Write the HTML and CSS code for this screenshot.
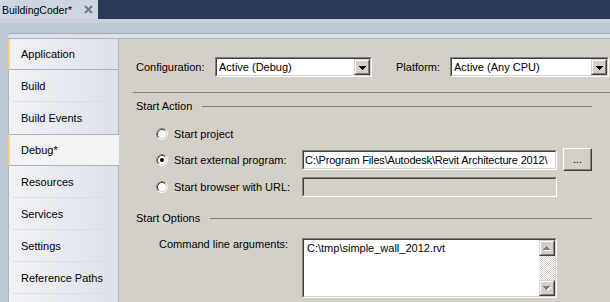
FILE: index.html
```html
<!DOCTYPE html>
<html>
<head>
<meta charset="utf-8">
<link rel="stylesheet" href="styles.css">
</head>
<body>
<div class="titlebar">
  <div class="doctab">
    <span class="doctab-title">BuildingCoder*</span>
    <svg class="close" width="9" height="9" viewBox="0 0 9 9"><path d="M1 1L8 8M8 1L1 8" stroke="#6b788b" stroke-width="1.8" fill="none"/></svg>
  </div>
  <div class="titlefill"></div>
</div>
<div class="band"></div>
<div class="workspace">
  <div class="frame">
    <div class="frame-top"></div>
    <div class="frame-body">
      <nav class="nav">
        <div class="item first">Application</div>
        <div class="item sep">Build</div>
        <div class="item">Build Events</div>
        <div class="item current">Debug*</div>
        <div class="item sep">Resources</div>
        <div class="item sep">Services</div>
        <div class="item sep">Settings</div>
        <div class="item sep">Reference Paths</div>
        <div class="item sep"></div>
      </nav>
      <main class="content">
        <div class="config-row">
          <span class="lbl-config">Configuration:</span>
          <div class="sunken combo combo-config">
            <div class="sunken-in combo-in">
              <span class="combo-text">Active (Debug)</span>
              <div class="raised arrow-btn"><div class="raised-in">
                <svg width="7" height="4" viewBox="0 0 7 4" shape-rendering="crispEdges"><rect x="0" y="0" width="7" height="1"/><rect x="1" y="1" width="5" height="1"/><rect x="2" y="2" width="3" height="1"/><rect x="3" y="3" width="1" height="1"/></svg>
              </div></div>
            </div>
          </div>
          <span class="lbl-platform">Platform:</span>
          <div class="sunken combo combo-platform">
            <div class="sunken-in combo-in">
              <span class="combo-text">Active (Any CPU)</span>
              <div class="raised arrow-btn"><div class="raised-in">
                <svg width="7" height="4" viewBox="0 0 7 4" shape-rendering="crispEdges"><rect x="0" y="0" width="7" height="1"/><rect x="1" y="1" width="5" height="1"/><rect x="2" y="2" width="3" height="1"/><rect x="3" y="3" width="1" height="1"/></svg>
              </div></div>
            </div>
          </div>
        </div>

        <div class="rule"></div>

        <div class="group group-action"><span>Start Action</span><span class="group-line"></span></div>

        <div class="radio-row row1">
          <label class="radio-label">
            <svg class="radio" width="12" height="12" viewBox="0 0 12 12"><circle cx="6" cy="6" r="5" fill="#fff"/><path d="M2.11 9.89A5.5 5.5 0 0 1 9.89 2.11" stroke="#808080" fill="none"/><path d="M9.89 2.11A5.5 5.5 0 0 1 2.11 9.89" stroke="#fff" fill="none"/><path d="M2.82 9.18A4.5 4.5 0 0 1 9.18 2.82" stroke="#404040" fill="none"/><path d="M9.18 2.82A4.5 4.5 0 0 1 2.82 9.18" stroke="#d4d0c8" fill="none"/></svg>
            <span>Start project</span>
          </label>
        </div>
        <div class="radio-row row2">
          <label class="radio-label">
            <svg class="radio" width="12" height="12" viewBox="0 0 12 12"><circle cx="6" cy="6" r="5" fill="#fff"/><path d="M2.11 9.89A5.5 5.5 0 0 1 9.89 2.11" stroke="#808080" fill="none"/><path d="M9.89 2.11A5.5 5.5 0 0 1 2.11 9.89" stroke="#fff" fill="none"/><path d="M2.82 9.18A4.5 4.5 0 0 1 9.18 2.82" stroke="#404040" fill="none"/><path d="M9.18 2.82A4.5 4.5 0 0 1 2.82 9.18" stroke="#d4d0c8" fill="none"/><circle cx="6" cy="6" r="2" fill="#000"/></svg>
            <span>Start external program:</span>
          </label>
          <div class="sunken field"><div class="sunken-in field-in">C:\Program Files\Autodesk\Revit Architecture 2012\</div></div>
          <div class="button-outer"><div class="button-in">...</div></div>
        </div>
        <div class="radio-row row3">
          <label class="radio-label">
            <svg class="radio" width="12" height="12" viewBox="0 0 12 12"><circle cx="6" cy="6" r="5" fill="#fff"/><path d="M2.11 9.89A5.5 5.5 0 0 1 9.89 2.11" stroke="#808080" fill="none"/><path d="M9.89 2.11A5.5 5.5 0 0 1 2.11 9.89" stroke="#fff" fill="none"/><path d="M2.82 9.18A4.5 4.5 0 0 1 9.18 2.82" stroke="#404040" fill="none"/><path d="M9.18 2.82A4.5 4.5 0 0 1 2.82 9.18" stroke="#d4d0c8" fill="none"/></svg>
            <span>Start browser with URL:</span>
          </label>
          <div class="sunken field disabled"><div class="sunken-in field-in"></div></div>
        </div>

        <div class="group group-options"><span>Start Options</span><span class="group-line"></span></div>

        <div class="args-row">
          <span class="args-label">Command line arguments:</span>
          <div class="sunken textarea">
            <div class="sunken-in textarea-in">
              <div class="ta-text">C:\tmp\simple_wall_2012.rvt</div>
              <div class="scrollbar">
                <div class="raised sb-btn"><div class="raised-in">
                  <svg width="8" height="5" viewBox="0 0 8 5" shape-rendering="crispEdges"><g fill="#fff"><rect x="4" y="1" width="1" height="1"/><rect x="3" y="2" width="3" height="1"/><rect x="2" y="3" width="5" height="1"/><rect x="1" y="4" width="7" height="1"/></g><g fill="#808080"><rect x="3" y="0" width="1" height="1"/><rect x="2" y="1" width="3" height="1"/><rect x="1" y="2" width="5" height="1"/><rect x="0" y="3" width="7" height="1"/></g></svg>
                </div></div>
                <div class="sb-track"></div>
                <div class="raised sb-btn"><div class="raised-in">
                  <svg width="8" height="5" viewBox="0 0 8 5" shape-rendering="crispEdges"><g fill="#fff"><rect x="1" y="1" width="7" height="1"/><rect x="2" y="2" width="5" height="1"/><rect x="3" y="3" width="3" height="1"/><rect x="4" y="4" width="1" height="1"/></g><g fill="#808080"><rect x="0" y="0" width="7" height="1"/><rect x="1" y="1" width="5" height="1"/><rect x="2" y="2" width="3" height="1"/><rect x="3" y="3" width="1" height="1"/></g></svg>
                </div></div>
              </div>
            </div>
          </div>
        </div>
      </main>
    </div>
  </div>
</div>
</body>
</html>
```
FILE: styles.css
```css
html, body {
  margin: 0;
  padding: 0;
  width: 610px;
  height: 302px;
  overflow: hidden;
}
body {
  background: #bcc7d8;
  font-family: "Liberation Sans", Arial, sans-serif;
  font-size: 11px;
  color: #000;
}

/* document tab strip */
.titlebar {
  display: flex;
  height: 19px;
}
.doctab {
  width: 98px;
  box-sizing: border-box;
  padding-left: 2px;
  padding-right: 5px;
  background: #cdd5e0;
  display: flex;
  align-items: center;
  font-size: 10.5px;
}
.doctab-title {
  flex: 1;
}
.close {
  display: block;
}
.titlefill {
  flex: 1;
  background: #293955;
}
.band {
  height: 4px;
  background: #c8d0dc;
}

.workspace {
  padding: 10px 0 0 8px;
}
.frame {
  border-top: 1px solid #a3acb9;
  border-top-left-radius: 3px;
  background: #dde2ea;
}
.frame-top {
  height: 4px;
}
.frame-body {
  display: flex;
  border-top: 1px solid #aab3c0;
  height: 263px;
  overflow: hidden;
}

/* navigation */
.nav {
  width: 111px;
  box-sizing: border-box;
  border-right: 1px solid #a9b5c6;
  background: linear-gradient(to right, #f1f2f5, #dce1ea);
  flex: none;
}
.item {
  height: 32px;
  box-sizing: border-box;
  border-left: 1px solid #a9b5c6;
  padding-left: 12px;
  display: flex;
  align-items: center;
  white-space: nowrap;
}
.item.sep {
  background: linear-gradient(#d9dee6, #d9dee6) no-repeat 4px 100% / 90px 1px;
}
.item.first {
  height: 31px;
  border-left: 2px solid #f0d48e;
  padding-left: 11px;
  border-bottom: 1px solid #a9b5c6;
}
.item.current {
  border-left: 2px solid #f0d48e;
  padding-left: 11px;
  border-top: 1px solid #a9b5c6;
  border-bottom: 1px solid #a9b5c6;
  background: #f3f3f3;
  margin-right: -1px;
}

/* content */
.content {
  flex: 1;
  background: #d4d0c8;
  padding: 18px 0 0 14px;
}
.config-row {
  display: flex;
  align-items: center;
  height: 20px;
}
.lbl-config {
  margin-left: 3px;
  width: 79px;
}
.lbl-platform {
  margin-left: 24px;
  width: 54px;
}

/* classic 3D borders */
.sunken {
  box-sizing: border-box;
  border: 1px solid;
  border-color: #808080 #ffffff #ffffff #808080;
}
.sunken-in {
  box-sizing: border-box;
  height: 100%;
  border: 1px solid;
  border-color: #404040 #d4d0c8 #d4d0c8 #404040;
  background: #fff;
}
.raised {
  box-sizing: border-box;
  border: 1px solid;
  border-color: #d4d0c8 #404040 #404040 #d4d0c8;
}
.raised-in {
  box-sizing: border-box;
  height: 100%;
  border: 1px solid;
  border-color: #ffffff #808080 #808080 #ffffff;
  background: #d4d0c8;
  display: flex;
  align-items: center;
  justify-content: center;
}

.combo {
  height: 20px;
}
.combo-config {
  width: 157px;
}
.combo-platform {
  width: 159px;
}
.combo-in {
  display: flex;
  align-items: center;
}
.combo-text {
  flex: 1;
  padding-left: 2px;
  white-space: nowrap;
  overflow: hidden;
}
.arrow-btn {
  width: 16px;
  height: 16px;
}
.arrow-btn svg {
  display: block;
  margin-top: 1px;
}

.rule {
  margin-top: 15px;
  height: 0;
  border-top: 1px solid #808080;
}

.group {
  display: flex;
  align-items: center;
  height: 14px;
  padding-left: 3px;
}
.group-action {
  margin-top: 6px;
}
.group-options {
  margin-top: 14px;
}
.group-line {
  flex: 1;
  height: 1px;
  background: #808080;
  margin: 0 18px 0 10px;
}

.radio-row {
  display: flex;
  align-items: center;
  margin-left: 23px;
}
.row1 {
  margin-top: 11px;
  height: 20px;
}
.row2 {
  margin-top: 4px;
  height: 23px;
}
.row3 {
  margin-top: 6px;
  height: 20px;
}
.radio-label {
  width: 146px;
  display: flex;
  align-items: center;
  gap: 6px;
  white-space: nowrap;
}
.radio {
  display: block;
  flex: none;
}

.field {
  width: 255px;
  height: 20px;
}
.field-in {
  display: flex;
  align-items: center;
  padding-left: 1px;
  white-space: nowrap;
  overflow: hidden;
  letter-spacing: -0.18px;
}
.field.disabled .sunken-in {
  background: #d4d0c8;
}

.button-outer {
  margin-left: 6px;
  width: 29px;
  height: 23px;
  box-sizing: border-box;
  border: 1px solid;
  border-color: #ffffff #404040 #404040 #ffffff;
}
.button-in {
  box-sizing: border-box;
  height: 100%;
  border: 1px solid;
  border-color: #d4d0c8 #808080 #808080 #d4d0c8;
  background: #d4d0c8;
  display: flex;
  align-items: center;
  justify-content: center;
  padding-bottom: 1px;
}

.args-row {
  display: flex;
  margin-top: 13px;
}
.args-label {
  margin-left: 26px;
  width: 143px;
  line-height: 13px;
  white-space: nowrap;
}
.textarea {
  width: 255px;
  height: 60px;
}
.textarea-in {
  display: flex;
}
.ta-text {
  flex: 1;
  padding: 2px 3px;
  line-height: 13px;
  white-space: nowrap;
  overflow: hidden;
}
.scrollbar {
  width: 16px;
  display: flex;
  flex-direction: column;
}
.sb-btn {
  width: 16px;
  height: 16px;
  flex: none;
}
.sb-btn svg {
  display: block;
}
.sb-track {
  flex: 1;
  background: repeating-conic-gradient(#d4d0c8 0 25%, #ffffff 0 50%) 0 0 / 2px 2px;
}
```
